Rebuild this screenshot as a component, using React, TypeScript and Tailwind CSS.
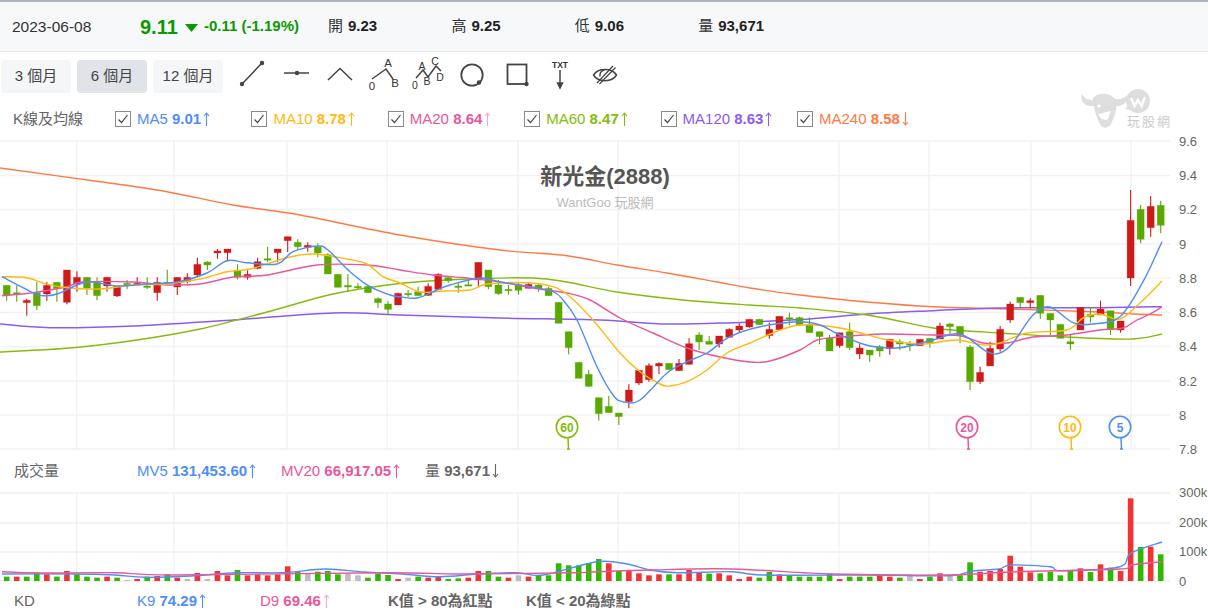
import React from 'react';

const FONT = { fontFamily: '"Liberation Sans", "Noto Sans CJK TC", sans-serif' };

// candle rows: [isGreen, bodyTop, bodyBottom, wickTop, wickBottom], read off the chart at 3x
type Row = [number, number, number, number, number];
const part = (base: number, rows: Row[]) =>
  rows.map(([g, t, b, h, l]) => ({ g, t: base + t / 3, b: base + b / 3, h: base + h / 3, l: base + l / 3 }));

const candles = [
  ...part(140, [
    [1, 436, 467, 436, 482], [1, 458, 460, 436, 485], [0, 481, 488, 476, 527], [1, 458, 497, 426, 510],
    [0, 436, 462, 426, 482], [1, 427, 446, 427, 485], [0, 390, 487, 390, 493], [0, 412, 432, 394, 455],
    [1, 412, 445, 412, 465], [1, 427, 467, 412, 481], [0, 412, 438, 412, 455], [0, 438, 468, 438, 471],
    [1, 430, 433, 420, 447], [0, 430, 434, 412, 436], [1, 438, 442, 412, 447], [0, 427, 458, 412, 482],
    [1, 427, 432, 389, 435], [0, 412, 441, 412, 465], [0, 412, 425, 400, 430], [0, 373, 405, 353, 408],
    [1, 366, 375, 364, 390], [0, 333, 339, 327, 356], [0, 327, 338, 327, 364], [1, 391, 412, 373, 418],
    [0, 403, 412, 391, 419], [0, 365, 385, 353, 388], [1, 356, 360, 320, 366], [0, 327, 338, 327, 367],
    [0, 290, 302, 290, 336], [1, 307, 320, 298, 330], [0, 316, 322, 307, 335], [1, 320, 339, 310, 352],
    [1, 344, 402, 340, 402], [1, 403, 442, 403, 442], [1, 436, 441, 403, 455], [1, 439, 443, 430, 447],
    [1, 439, 458, 438, 458], [1, 476, 488, 472, 503], [1, 492, 508, 484, 521], [0, 460, 495, 458, 495],
  ]),
  ...part(250, [
    [1, 130, 133, 120, 142], [1, 125, 137, 110, 137], [0, 109, 136, 100, 138], [0, 73, 118, 70, 118],
    [1, 83, 92, 80, 98], [1, 108, 111, 100, 128], [1, 104, 107, 88, 108], [0, 37, 90, 37, 108],
    [1, 60, 110, 60, 118], [1, 105, 131, 90, 134], [1, 118, 121, 105, 134], [1, 105, 121, 98, 134],
    [0, 103, 115, 98, 115], [1, 105, 116, 100, 125], [1, 115, 137, 110, 137], [1, 157, 220, 157, 220],
    [1, 245, 293, 245, 313], [1, 337, 385, 337, 385], [1, 373, 409, 360, 411], [1, 443, 491, 443, 512],
    [1, 469, 488, 438, 488], [1, 489, 500, 489, 525], [0, 420, 455, 403, 475], [0, 361, 399, 361, 405],
    [0, 347, 389, 340, 395], [0, 340, 348, 337, 372], [1, 340, 359, 340, 359], [0, 340, 362, 327, 362],
    [0, 281, 343, 265, 343], [1, 255, 276, 247, 300], [1, 274, 283, 258, 283], [0, 258, 282, 258, 293],
    [0, 238, 262, 235, 262], [0, 228, 240, 220, 248], [0, 208, 231, 208, 233], [1, 208, 224, 208, 225],
    [0, 238, 257, 218, 266], [0, 199, 239, 199, 239], [1, 203, 205, 188, 226], [1, 203, 225, 200, 228],
  ]),
  ...part(180, [
    [1, 433, 458, 412, 458], [1, 455, 470, 455, 493], [1, 474, 513, 465, 513], [0, 458, 497, 458, 503],
    [1, 455, 503, 428, 510], [0, 504, 522, 490, 537], [1, 510, 525, 510, 545], [1, 500, 513, 495, 530],
    [0, 478, 506, 478, 524], [1, 485, 492, 478, 510], [1, 490, 495, 483, 513], [0, 478, 497, 478, 497],
    [1, 475, 490, 475, 503], [0, 438, 477, 428, 477], [1, 432, 440, 428, 465], [1, 439, 465, 439, 490],
    [1, 501, 605, 495, 630], [0, 577, 605, 560, 612], [0, 505, 558, 485, 558], [0, 448, 507, 438, 515],
    [0, 372, 420, 365, 428], [1, 352, 368, 352, 385], [0, 362, 368, 355, 385], [1, 346, 400, 346, 417],
    [1, 400, 420, 400, 465], [1, 433, 475, 433, 475], [1, 485, 492, 465, 510], [0, 382, 450, 382, 450],
    [1, 403, 411, 382, 428], [0, 387, 405, 362, 405], [1, 392, 448, 392, 465], [0, 423, 450, 423, 458],
    [0, 121, 294, 30, 318], [1, 88, 178, 75, 190], [0, 79, 143, 48, 170], [1, 76, 136, 62, 160],
  ]),
];

const barX = (i: number) => 6.7 + i * 10.035;

// moving averages as [x, y] pairs on the page
const ma240 = [[0, 168], [100, 181.7], [167, 191.7], [233, 205], [300, 215], [400, 235], [500, 250], [567, 255.7], [617, 265], [667, 273], [717, 282], [750, 288], [800, 295], [867, 302], [933, 306.7], [1000, 308.7], [1100, 312], [1133, 314], [1162, 315]];
const ma120 = [[0, 324], [50, 327.7], [133, 326], [233, 320], [333, 313], [400, 315], [500, 318], [600, 320], [667, 324], [733, 322.7], [800, 319.5], [867, 314], [933, 310.7], [1000, 308], [1100, 307.7], [1162, 306.7]];
const ma60 = [[0, 352], [70, 348], [137, 340], [200, 329], [267, 312], [333, 294], [400, 283.5], [467, 279], [533, 278], [567, 282], [617, 292], [683, 300], [750, 305], [800, 308], [867, 315], [933, 328], [967, 331], [1000, 333], [1067, 337], [1133, 339], [1162, 334]];
const ma20 = [[2, 295.7], [33, 292.7], [67, 286.7], [83, 282], [133, 282], [167, 285], [200, 284], [233, 277], [267, 275], [317, 265], [367, 265], [400, 270], [433, 275], [467, 278], [500, 282], [533, 288], [567, 293], [590, 300], [620, 318], [653, 333], [687, 348], [720, 357], [750, 362], [770, 361], [800, 350], [817, 340], [840, 337], [883, 334], [933, 335], [960, 335.7], [983, 343], [1007, 343], [1033, 337], [1067, 335], [1100, 330], [1123, 328], [1137, 320], [1150, 314], [1162, 306.7]];
const ma10 = [[2, 276.7], [27, 277.7], [43, 283], [67, 287.7], [100, 289], [133, 285], [167, 284], [200, 279], [227, 271.7], [250, 269], [287, 257.7], [313, 254], [347, 259], [367, 264], [383, 276.7], [400, 283], [420, 292], [443, 291], [470, 290], [487, 284], [527, 282.7], [553, 286.7], [570, 296.7], [593, 320], [620, 353], [640, 371.7], [660, 384], [670, 386], [687, 381.7], [707, 370], [727, 353], [750, 343], [773, 333], [800, 325], [840, 328], [887, 340], [917, 344], [933, 343], [957, 340], [983, 345], [1000, 343], [1027, 333], [1067, 330], [1083, 318], [1100, 314], [1120, 319], [1140, 303], [1162, 281]];
const ma5 = [[2, 276.7], [33, 292.7], [43, 295.7], [57, 294], [87, 282], [117, 286], [147, 284], [177, 282], [207, 273], [227, 260.7], [247, 262.7], [277, 264], [293, 251.7], [317, 246], [328, 250], [350, 271.7], [370, 286.7], [390, 295], [400, 296.7], [417, 298], [437, 290], [450, 285], [480, 278], [500, 282], [527, 286], [553, 291.7], [563, 300], [577, 320], [597, 366.7], [613, 395], [623, 401.7], [640, 400], [667, 373], [687, 361.7], [707, 353], [730, 336.7], [760, 326.7], [800, 321.7], [820, 325], [840, 335], [870, 346], [900, 347.7], [933, 340], [960, 334], [987, 351.7], [1000, 353], [1013, 343], [1033, 315], [1050, 307], [1073, 322.7], [1093, 324], [1120, 316.7], [1143, 281.7], [1162, 241.7]];

const mv5 = [[2, 574], [76, 574], [115, 575], [145, 577.3], [191, 576], [237, 572.7], [283, 572.7], [325, 569], [364, 572], [402, 574], [440, 576.7], [478, 574], [517, 572.7], [543, 575], [597, 561.7], [627, 564], [650, 570], [677, 572.7], [732, 571.7], [763, 575], [871, 575], [949, 575.7], [972, 571], [999, 569], [1011, 565], [1050, 566.7], [1061, 570.7], [1119, 567], [1131, 553], [1162, 542]];
const mv20 = [[2, 571.7], [38, 573], [115, 572.7], [172, 575], [383, 572.7], [459, 574], [574, 572.7], [597, 571.7], [650, 570], [732, 569], [833, 574], [949, 575], [1011, 572], [1119, 569], [1131, 565], [1162, 561.7]];

// smooth a polyline the way the chart draws its averages
const smooth = (pts: number[][], top: number) => {
  let d = `M${pts[0][0]} ${pts[0][1] - top}`;
  for (let i = 0; i < pts.length - 1; i++) {
    const p0 = pts[i - 1] || pts[i];
    const p1 = pts[i];
    const p2 = pts[i + 1];
    const p3 = pts[i + 2] || p2;
    const c1x = p1[0] + (p2[0] - p0[0]) / 6;
    const c1y = p1[1] + (p2[1] - p0[1]) / 6;
    const c2x = p2[0] - (p3[0] - p1[0]) / 6;
    const c2y = p2[1] - (p3[1] - p1[1]) / 6;
    d += `C${c1x.toFixed(1)} ${(c1y - top).toFixed(1)} ${c2x.toFixed(1)} ${(c2y - top).toFixed(1)} ${p2[0]} ${(p2[1] - top).toFixed(1)}`;
  }
  return d;
};

// volume: 0 red, 1 green, 2 grey; height in 3x pixels
const volume: [number, number][] = [
  [1, 13], [0, 13], [1, 13], [1, 25], [0, 20], [1, 13], [0, 30], [1, 20], [1, 13], [1, 10], [0, 13], [1, 10],
  [2, 3], [0, 6], [1, 13], [0, 15], [1, 20], [0, 10], [2, 6], [0, 24], [2, 6], [0, 30], [0, 17], [1, 33],
  [0, 17], [0, 20], [0, 17], [0, 20], [0, 44], [1, 28], [2, 22], [1, 28], [1, 30], [1, 20], [2, 22], [2, 17],
  [1, 10], [1, 22], [1, 18], [0, 6], [2, 10], [1, 13], [0, 10], [0, 13], [1, 6], [1, 8], [0, 10], [0, 30],
  [1, 30], [1, 13], [0, 10], [2, 17], [0, 13], [1, 17], [1, 17], [1, 53], [1, 47], [1, 47], [1, 53], [1, 66],
  [0, 53], [1, 30], [0, 32], [0, 23], [0, 17], [0, 20], [1, 20], [0, 20], [0, 33], [0, 25], [1, 22], [0, 23],
  [0, 17], [0, 6], [0, 13], [1, 10], [1, 27], [0, 20], [1, 17], [1, 13], [1, 13], [1, 13], [1, 22], [0, 6],
  [1, 13], [1, 13], [1, 13], [0, 17], [0, 13], [1, 10], [2, 17], [0, 6], [1, 13], [0, 23], [2, 17], [1, 17],
  [1, 56], [0, 28], [0, 30], [0, 36], [0, 76], [0, 43], [0, 26], [1, 23], [1, 28], [1, 17], [1, 30], [0, 38],
  [1, 27], [0, 50], [1, 40], [0, 30], [0, 248], [1, 102], [0, 103], [1, 80],
];

const priceGrid = [
  { y: 1, label: '9.6' }, { y: 35.5, label: '9.4' }, { y: 69.5, label: '9.2' }, { y: 104, label: '9' },
  { y: 138, label: '8.8' }, { y: 172.5, label: '8.6' }, { y: 206.5, label: '8.4' }, { y: 241, label: '8.2' },
  { y: 275, label: '8' }, { y: 309, label: '7.8' },
];
const vLines = [76.7, 174, 287, 387, 518, 618, 739, 839, 929, 1031, 1131];

const pins = [
  { x: 567, label: '60', color: '#84bc0c' },
  { x: 967, label: '20', color: '#e8579a' },
  { x: 1070, label: '10', color: '#ffb90f' },
  { x: 1120, label: '5', color: '#4f8ef7' },
];

const averages = [
  { name: 'MA5', value: '9.01', up: true, cls: 'text-[#4f8ef7]' },
  { name: 'MA10', value: '8.78', up: true, cls: 'text-[#ffb90f]' },
  { name: 'MA20', value: '8.64', up: true, cls: 'text-[#e8579a]' },
  { name: 'MA60', value: '8.47', up: true, cls: 'text-[#84bc0c]' },
  { name: 'MA120', value: '8.63', up: true, cls: 'text-[#8a5cf0]' },
  { name: 'MA240', value: '8.58', up: false, cls: 'text-[#ff7a45]' },
];

const Arrow = ({ up = true, faint = false }: { up?: boolean; faint?: boolean }) => (
  <svg width="7" height="14" viewBox="0 0 7 14" className={`ml-[2px] inline-block align-[-2px] ${faint ? 'opacity-50' : ''}`} fill="none" stroke="currentColor" strokeWidth="1.1">
    {up ? <path d="M3.5 14 V1 M1 4 L3.5 1 L6 4" /> : <path d="M3.5 0 V13 M1 10 L3.5 13 L6 10" />}
  </svg>
);

const Checkbox = () => (
  <span className="flex h-4 w-4 shrink-0 items-center justify-center border border-[#8a8a8a] bg-white">
    <svg width="12" height="12" viewBox="0 0 12 12" fill="none" stroke="#444" strokeWidth="1.2">
      <path d="M1.5 6.5 L4.5 9.5 L10.5 2" />
    </svg>
  </span>
);

const Dot = ({ cx, cy }: { cx: number; cy: number }) => <circle cx={cx} cy={cy} r="2.2" fill="#444" stroke="none" />;

const Label = ({ x, y, size = 11.5, bold = false, children }: { x: number; y: number; size?: number; bold?: boolean; children: string }) => (
  <text x={x} y={y} textAnchor="middle" fontSize={size} fontWeight={bold ? 700 : 400} fill="#333" stroke="none" style={FONT}>
    {children}
  </text>
);

const DrawTools = () => (
  // origin of this drawing is x=223, y=58 on the page
  <svg width="400" height="36" viewBox="0 0 400 36" className="shrink-0 overflow-visible" fill="none" stroke="#444" strokeWidth="1.5">
    <path d="M19 26 L39 5" /><Dot cx={19} cy={26} /><Dot cx={39} cy={5} />
    <path d="M61 15 L86 15" /><Dot cx={74} cy={15} />
    <path d="M105 22 L117 10.5 L129 22" />
    <path d="M149 21 L163 11 L170 21" />
    <Label x={165} y={9}>A</Label>
    <Label x={149} y={32}>0</Label>
    <Label x={172} y={29}>B</Label>
    <path d="M193 20 L200 12 L205 19 L213 8 L218 13" />
    <Label x={199} y={12} size={10.5}>A</Label>
    <Label x={212} y={7} size={10.5}>C</Label>
    <Label x={192} y={31} size={10.5}>0</Label>
    <Label x={204} y={27} size={10.5}>B</Label>
    <Label x={217} y={23} size={10.5}>D</Label>
    <circle cx="249" cy="17" r="10.7" strokeWidth="1.8" /><Dot cx={256} cy={24.5} />
    <rect x="284.5" y="6.5" width="19" height="19.5" strokeWidth="1.8" /><Dot cx={303.5} cy={26} />
    <Label x={337} y={10} size={8.5} bold>TXT</Label>
    <path d="M337 12 L337 28" /><path d="M334.5 25 L337 30 L339.5 25 Z" fill="#444" />
    <path d="M370.5 17 C375 9.5 389 9.5 393.5 17 C389 24.5 375 24.5 370.5 17 Z" />
    <path d="M381.5 12 C377.5 12.5 376.5 16 377 18.5" />
    <path d="M374 25 L390 8 M376.5 26 L392.5 9.5" strokeWidth="1.2" />
  </svg>
);

const Watermark = () => (
  <div className="pointer-events-none absolute left-[1078px] top-[86px] h-[46px] w-[96px]">
    <svg width="74" height="44" viewBox="0 0 74 44" fill="#dedede">
      <path d="M4 8 C1 16 8 21 16 20 L17 14 C11 15 7 13 4 8 Z" />
      <path d="M49 9 C50 16 45 21 37 20 L36 13 C41 14 46 13 49 9 Z" />
      <path d="M15 12 C20 6 32 6 38 14 C40 22 36 32 33 38 C30 43 24 43 22 38 C19 32 15 22 15 12 Z" />
      <circle cx="21" cy="20" r="1.6" fill="#fff" />
      <path d="M20 28 L33 25 L30 33 C27 35 23 34 20 28 Z" fill="#fff" />
      <circle cx="60" cy="15" r="12" />
      <path d="M47 23 L52 18 L54 24 Z" />
      <path d="M53 12 L56.5 20 L60 14 L63.5 20 L67 11" fill="none" stroke="#fff" strokeWidth="2.4" />
    </svg>
    <span className="absolute left-[49px] top-[29px] text-[13px] leading-none tracking-[2px] text-[#cdcdcd]">玩股網</span>
  </div>
);

const Header = () => (
  <div className="flex h-[52px] items-center border-b border-[#e6e8eb] border-t-2 border-t-[#aeb6c0] bg-[#f7f8fa] pl-3 text-[#222]">
    <span className="w-[128px] text-[15.5px] text-[#333]">2023-06-08</span>
    <span className="w-[45px] text-[20px] font-bold text-[#0a9a00]">9.11</span>
    <svg width="13" height="8" viewBox="0 0 13 8" className="mr-[6px] mt-[3px] shrink-0">
      <path d="M0 0 H13 L6.5 8 Z" fill="#0a9a00" />
    </svg>
    <span className="w-[124px] whitespace-nowrap text-[15px] font-bold text-[#0a9a00]">-0.11 (-1.19%)</span>
    {[['開', '9.23'], ['高', '9.25'], ['低', '9.06'], ['量', '93,671']].map(([k, v]) => (
      <span key={k} className="flex w-[123.4px] items-center gap-[5px] text-[15px]">
        <span className="text-[#333]">{k}</span>
        <span className="font-bold">{v}</span>
      </span>
    ))}
  </div>
);

const Toolbar = () => (
  <div className="flex h-[48px] items-center pl-px">
    <div className="flex gap-[6px]">
      {['3 個月', '6 個月', '12 個月'].map((t) => (
        <button
          key={t}
          className={`flex h-[33px] w-[70px] items-center justify-center rounded-sm text-[15px] text-[#444] ${t === '6 個月' ? 'bg-[#e0e4e8]' : 'bg-[#f5f6f7]'}`}
        >
          {t}
        </button>
      ))}
    </div>
    <DrawTools />
  </div>
);

const MaRow = () => (
  <div className="flex h-[40px] items-center pb-[2px] pl-[13px]">
    <span className="w-[102px] text-[15px] text-[#666]">K線及均線</span>
    {averages.map((a) => (
      <div key={a.name} className={`flex w-[136.4px] items-center gap-[6px] text-[15px] ${a.cls}`}>
        <Checkbox />
        <span className="whitespace-nowrap">
          {a.name} <b>{a.value}</b>
          <Arrow up={a.up} faint={a.name === 'MA20'} />
        </span>
      </div>
    ))}
  </div>
);

const PriceChart = () => (
  <div className="relative h-[310px] w-full">
    <svg width="1208" height="310" viewBox="0 0 1208 310" className="block overflow-visible">
      {priceGrid.map((g) => (
        <line key={g.label} x1="0" x2="1170" y1={g.y} y2={g.y} stroke="#f2f2f2" strokeWidth="1.4" />
      ))}
      {vLines.map((x) => (
        <line key={x} x1={x} x2={x} y1="0" y2="309" stroke="#f0f0f0" strokeWidth="1.2" />
      ))}
      <path d={smooth(ma240, 140)} fill="none" stroke="#ff7a45" strokeWidth="1.4" />
      <path d={smooth(ma120, 140)} fill="none" stroke="#8a5cf0" strokeWidth="1.5" />
      <path d={smooth(ma60, 140)} fill="none" stroke="#84bc0c" strokeWidth="1.4" />
      {candles.map((c, i) => {
        const col = c.g ? '#5ba800' : '#cf1a1a';
        const x = barX(i);
        return (
          <g key={i}>
            <line x1={x} x2={x} y1={c.h - 140} y2={c.l - 140} stroke={col} strokeWidth="1.1" />
            <rect x={x - 3.5} y={c.t - 140} width="7" height={Math.max(c.b - c.t, 1.5)} fill={col} stroke={col} strokeOpacity="0.3" strokeWidth="1" />
          </g>
        );
      })}
      <path d={smooth(ma20, 140)} fill="none" stroke="#e8579a" strokeWidth="1.4" />
      <path d={smooth(ma10, 140)} fill="none" stroke="#ffb90f" strokeWidth="1.4" />
      <path d={smooth(ma5, 140)} fill="none" stroke="#4f8ef7" strokeWidth="1.4" />
      {pins.map((p) => (
        <g key={p.label}>
          <path d={`M${p.x + 1} 298 L${p.x + 1.5} 309 M${p.x} 309 H${p.x + 3}`} stroke={p.color} strokeWidth="1.5" fill="none" />
          <circle cx={p.x} cy="287" r="10.7" fill="#fff" stroke={p.color} strokeWidth="1.6" />
          <text x={p.x} y="291.5" textAnchor="middle" fontSize="12" fontWeight="700" fill={p.color} style={FONT}>{p.label}</text>
        </g>
      ))}
      {priceGrid.map((g) => (
        <text key={g.label} x="1179" y={g.y + 4.5} fontSize="13" fill="#666" style={FONT}>{g.label}</text>
      ))}
    </svg>
    <div className="absolute left-[405px] top-[23px] w-[400px] text-center">
      <div className="text-[22px] font-bold leading-[28px] text-[#555]">新光金(2888)</div>
      <div className="mt-[4px] text-[13px] leading-[16px] text-[#bbb]">WantGoo 玩股網</div>
    </div>
  </div>
);

const VolumeRow = () => (
  <div className="flex h-[42px] items-center pl-[14px] text-[15px]">
    <span className="w-[123px] text-[#666]">成交量</span>
    <span className="w-[144px] whitespace-nowrap text-[#4f8ef7]">MV5 <b>131,453.60</b><Arrow /></span>
    <span className="w-[144px] whitespace-nowrap text-[#e8579a]">MV20 <b>66,917.05</b><Arrow /></span>
    <span className="whitespace-nowrap text-[#666]">量 <b>93,671</b><Arrow up={false} /></span>
  </div>
);

const VolumeChart = () => {
  const base = 581;
  const top = 492;
  return (
    <svg width="1208" height="98" viewBox="0 0 1208 98" className="block overflow-visible">
      {[493, 523, 552, 581].map((y) => (
        <line key={y} x1="0" x2="1170" y1={y - top} y2={y - top} stroke="#f0f0f0" strokeWidth="1.4" />
      ))}
      {vLines.map((x) => (
        <line key={x} x1={x} x2={x} y1="0" y2="89" stroke="#f0f0f0" strokeWidth="1.2" />
      ))}
      {volume.map(([c, h], i) => (
        <rect
          key={i}
          x={barX(i) - 2.8}
          y={base - top - h / 3}
          width="5.6"
          height={h / 3}
          fill={c === 0 ? '#f23333' : c === 1 ? '#2eb800' : '#bdbdbd'}
        />
      ))}
      <path d={smooth(mv5, top)} fill="none" stroke="#4f8ef7" strokeWidth="1.4" />
      <path d={smooth(mv20, top)} fill="none" stroke="#e8579a" strokeWidth="1.4" />
      {[['300k', 5], ['200k', 35], ['100k', 64], ['0', 94]].map(([t, y]) => (
        <text key={t} x="1179" y={y} fontSize="13" fill="#666" style={FONT}>{t}</text>
      ))}
    </svg>
  );
};

const KdRow = () => (
  <div className="flex h-[23px] items-center pl-[14px] text-[15px]">
    <span className="w-[123px] text-[#666]">KD</span>
    <span className="w-[123px] whitespace-nowrap text-[#4f8ef7]">K9 <b>74.29</b><Arrow /></span>
    <span className="w-[128px] whitespace-nowrap text-[#e8579a]">D9 <b>69.46</b><Arrow faint /></span>
    <b className="w-[138px] whitespace-nowrap text-[#666]">K值 &gt; 80為紅點</b>
    <b className="whitespace-nowrap text-[#666]">K值 &lt; 20為綠點</b>
  </div>
);

export default function App() {
  return (
    <div className="relative h-[613px] w-[1208px] overflow-hidden bg-white" style={FONT}>
      <Header />
      <Toolbar />
      <MaRow />
      <PriceChart />
      <VolumeRow />
      <VolumeChart />
      <KdRow />
      <Watermark />
    </div>
  );
}
